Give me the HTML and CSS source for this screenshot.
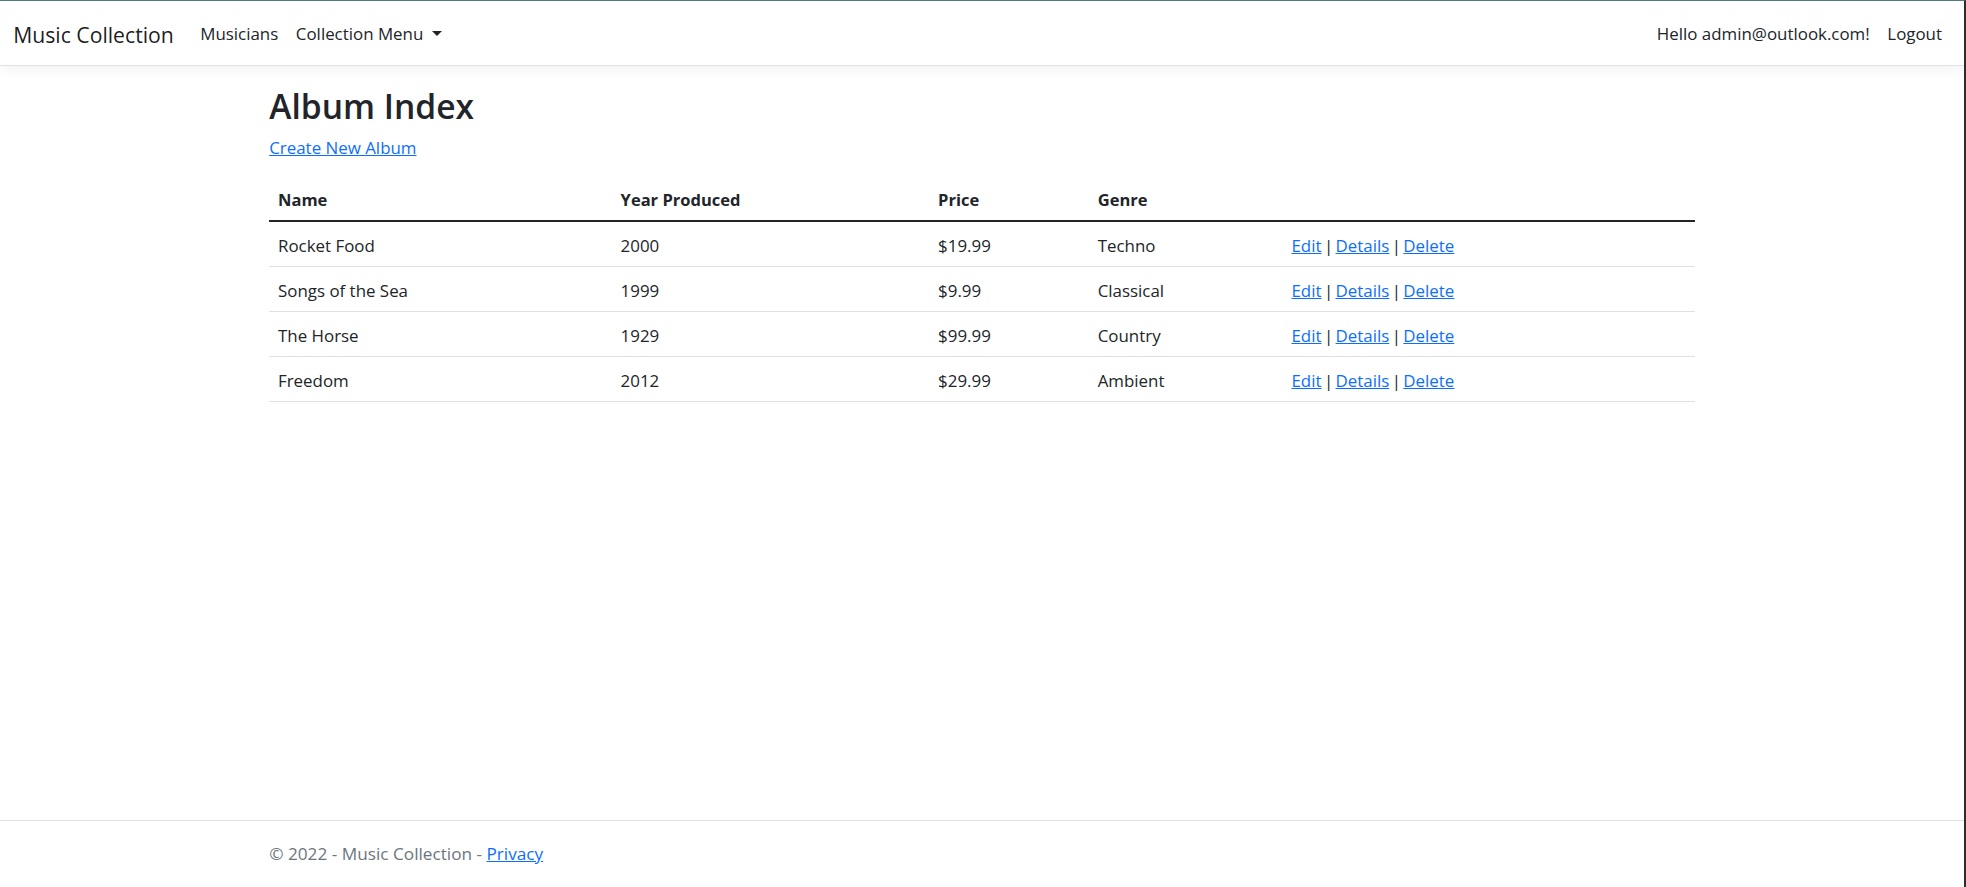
FILE: index.html
```html
<!DOCTYPE html>
<html lang="en">
<head>
<meta charset="utf-8">
<title>Album Index - Music Collection</title>
<link rel="stylesheet" href="styles.css">
</head>
<body>
<div class="window">
  <header class="navbar">
    <div class="nav-inner">
      <a class="brand" href="#">Music Collection</a>
      <ul class="nav-list nav-main">
        <li><a class="nav-link" href="#">Musicians</a></li>
        <li><a class="nav-link dropdown-toggle" href="#">Collection Menu</a></li>
      </ul>
      <ul class="nav-list nav-user">
        <li><a class="nav-link" href="#">Hello admin@outlook.com!</a></li>
        <li><a class="nav-link" href="#">Logout</a></li>
      </ul>
    </div>
  </header>

  <div class="container">
    <main class="main">
      <h1 class="page-title">Album Index</h1>
      <p class="create"><a href="#">Create New Album</a></p>
      <table class="table">
        <colgroup>
          <col class="c-name">
          <col class="c-year">
          <col class="c-price">
          <col class="c-genre">
          <col class="c-actions">
        </colgroup>
        <thead>
          <tr>
            <th>Name</th>
            <th>Year Produced</th>
            <th>Price</th>
            <th>Genre</th>
            <th></th>
          </tr>
        </thead>
        <tbody>
          <tr>
            <td>Rocket Food</td>
            <td>2000</td>
            <td>$19.99</td>
            <td>Techno</td>
            <td class="actions"><a href="#">Edit</a> | <a href="#">Details</a> | <a href="#">Delete</a></td>
          </tr>
          <tr>
            <td>Songs of the Sea</td>
            <td>1999</td>
            <td>$9.99</td>
            <td>Classical</td>
            <td class="actions"><a href="#">Edit</a> | <a href="#">Details</a> | <a href="#">Delete</a></td>
          </tr>
          <tr>
            <td>The Horse</td>
            <td>1929</td>
            <td>$99.99</td>
            <td>Country</td>
            <td class="actions"><a href="#">Edit</a> | <a href="#">Details</a> | <a href="#">Delete</a></td>
          </tr>
          <tr>
            <td>Freedom</td>
            <td>2012</td>
            <td>$29.99</td>
            <td>Ambient</td>
            <td class="actions"><a href="#">Edit</a> | <a href="#">Details</a> | <a href="#">Delete</a></td>
          </tr>
        </tbody>
      </table>
    </main>
  </div>

  <footer class="footer">
    <div class="container">
      &copy; 2022 - Music Collection - <a href="#">Privacy</a>
    </div>
  </footer>
</div>
</body>
</html>
```

FILE: styles.css
```css
html, body {
  margin: 0;
  padding: 0;
  height: 100%;
}

body {
  font-family: "Open Sans", "Noto Sans", "Liberation Sans", sans-serif;
  font-size: 16.9px;
  line-height: 26.4px;
  color: #212529;
  background: #ffffff;
}

a {
  color: #0d6efd;
  text-decoration: underline;
}

.window {
  min-height: 100vh;
  box-sizing: border-box;
  border-top: 1px solid #4b7d83;
  border-right: 2px solid #2e2e2e;
  display: flex;
  flex-direction: column;
}

/* ---------- navbar ---------- */
.navbar {
  background: #fff;
  border-bottom: 1px solid #dee2e6;
  box-shadow: 0 4.4px 13.2px rgba(0, 0, 0, 0.05);
  padding: 10px 0;
  margin-bottom: 17.6px;
}

.nav-inner {
  display: flex;
  align-items: center;
  padding: 0 13.2px;
}

.brand {
  font-size: 21.2px;
  line-height: 33px;
  padding: 6.8px 0 4.2px;
  margin-right: 17.6px;
  color: rgba(0, 0, 0, 0.9);
  text-decoration: none;
}

.nav-list {
  list-style: none;
  margin: 0;
  padding: 0;
  display: flex;
}

.nav-main {
  flex: 1;
}

.nav-link {
  display: block;
  padding: 10.2px 8.8px 7.4px;
  color: #212529;
  text-decoration: none;
}

.dropdown-toggle::after {
  content: "";
  display: inline-block;
  margin-left: 9px;
  vertical-align: 4px;
  border-top: 5.2px solid;
  border-right: 5px solid transparent;
  border-left: 5px solid transparent;
  border-bottom: 0;
}

/* ---------- content ---------- */
.container {
  width: 1425.6px;
  margin: 0 auto;
}

.main {
  padding-bottom: 17.6px;
}

.page-title {
  margin: 0 0 7.6px;
  padding-top: 1.2px;
  font-size: 33.6px;
  font-weight: 600;
  line-height: 42.2px;
}

.create {
  margin: 0 0 15.2px;
}

.table {
  width: 100%;
  border-collapse: collapse;
  table-layout: fixed;
  color: #212529;
}

.c-name { width: 342.6px; }
.c-year { width: 317.5px; }
.c-price { width: 159.6px; }
.c-genre { width: 193.8px; }
.c-actions { width: auto; }

.table th,
.table td {
  padding: 10.6px 8.8px 7px;
  text-align: left;
  vertical-align: top;
  border-bottom: 1px solid #dee2e6;
}

.table th {
  font-weight: 700;
  font-size: 16.5px;
}

.table thead th {
  border-bottom: 2px solid #212529;
}

.actions {
  word-spacing: -2px;
}

/* ---------- footer ---------- */
.footer {
  margin-top: auto;
  border-top: 1px solid #dee2e6;
  line-height: 66px;
  white-space: nowrap;
  font-size: 17.2px;
  color: #6c757d;
}
```
